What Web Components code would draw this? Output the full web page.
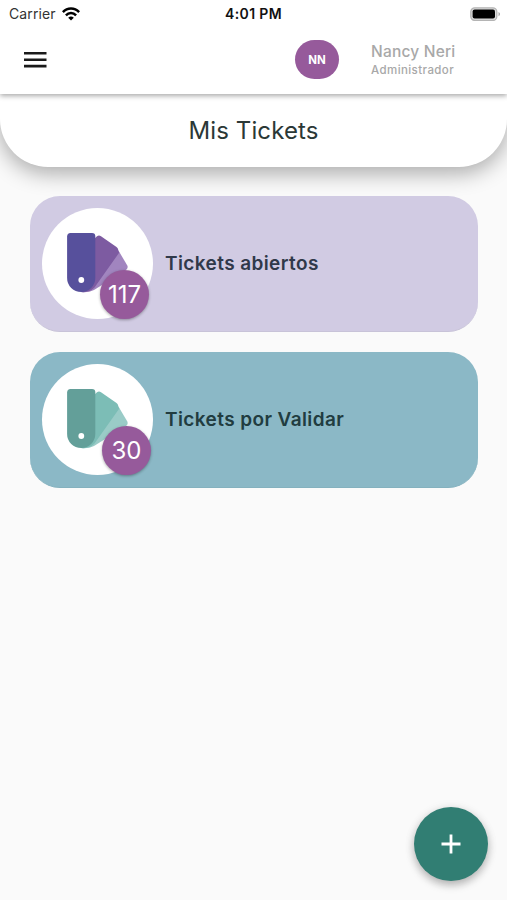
<!DOCTYPE html>
<html lang="es">
<head>
<meta charset="utf-8">
<title>Mis Tickets</title>
<style>
    html, body {
        height: 100%;
        margin: 0;
    }
    body {
        font-family: Inter, "Liberation Sans", sans-serif;
        background: #fafafa;
        overflow: hidden;
    }
</style>
</head>
<body>

<tickets-app>
    <status-bar slot="top" carrier="Carrier" time="4:01 PM"></status-bar>
    <app-header slot="top" initials="NN">
        <span slot="name">Nancy Neri</span>
        <span slot="role">Administrador</span>
    </app-header>
    <page-title slot="title">Mis Tickets</page-title>
    <ticket-card count="117" style="--card: #d1cbe3; --c1: #57509c; --c2: #7d5ba1; --c3: #a185bf; --edge: #c8c3d8; --text: #30394a; --badge-right: 4px">Tickets abiertos</ticket-card>
    <ticket-card count="30" style="--card: #8bb8c6; --c1: #639f99; --c2: #7cbdb6; --c3: #9acbc7; --edge: #84b1be; --text: #213c40; --badge-right: 2px">Tickets por Validar</ticket-card>
    <add-button slot="action"></add-button>
</tickets-app>

<script>
customElements.define("tickets-app", class extends HTMLElement {
    connectedCallback() {
        if (this.shadowRoot) return

        this.attachShadow({mode: "open"}).innerHTML = `
            <style>
                :host {
                    display: flex;
                    flex-direction: column;
                    height: 100vh;
                }
                header {
                    position: relative;
                    z-index: 2;
                    height: 94px;
                    flex: none;
                    background: #fff;
                    box-shadow: 0 2px 5px #0005;
                }
                main {
                    display: flex;
                    flex-direction: column;
                    gap: 20px;
                    flex: 1;
                    padding: 29px 29px 0 30px;
                }
                footer {
                    display: flex;
                    justify-content: flex-end;
                    padding: 0 19px 19px 0;
                }
            </style>

            <header><slot name="top"></slot></header>
            <slot name="title"></slot>
            <main><slot></slot></main>
            <footer><slot name="action"></slot></footer>
        `
    }
})

customElements.define("status-bar", class extends HTMLElement {
    connectedCallback() {
        if (this.shadowRoot) return

        this.attachShadow({mode: "open"}).innerHTML = `
            <style>
                :host {
                    display: grid;
                    grid-template-columns: 1fr auto 1fr;
                    align-items: center;
                    height: 27px;
                    padding: 0 7px 0 9px;
                    font-size: 14px;
                    color: #111;
                }
                .left {
                    display: flex;
                    align-items: center;
                    gap: 6px;
                    color: #333;
                }
                .left span {
                    letter-spacing: 0.1px;
                }
                b {
                    margin-right: 2px;
                    font-weight: 600;
                    letter-spacing: 0.35px;
                }
                svg {
                    display: block;
                }
                .battery {
                    justify-self: end;
                }
            </style>

            <div class="left">
                <span>${this.getAttribute("carrier")}</span>
                <svg width="18" height="14" viewBox="0 0 18 14" fill="none" stroke="#000" stroke-width="2.5">
                    <path d="M0.9 5.2C5.4 .4 12.6 .4 17.1 5.2"/>
                    <path d="M3.9 8.3C6.8 5.3 11.2 5.3 14.1 8.3"/>
                    <path d="M9 13.6L6.2 10.7Q9 8.5 11.8 10.7Z" fill="#000" stroke="none"/>
                </svg>
            </div>
            <b>${this.getAttribute("time")}</b>
            <svg class="battery" width="30" height="14" viewBox="0 0 30 14">
                <rect x="0.8" y="0.8" width="26" height="12.6" rx="4" fill="#ddd" stroke="#b4b4b4" stroke-width="1.3"/>
                <rect x="2.6" y="2.6" width="22.4" height="9" rx="2" fill="#000"/>
                <path d="M28.5 5Q30.2 6 30 7Q30.2 8.2 28.5 9.2Z" fill="#aaa"/>
            </svg>
        `
    }
})

customElements.define("app-header", class extends HTMLElement {
    connectedCallback() {
        if (this.shadowRoot) return

        this.attachShadow({mode: "open"}).innerHTML = `
            <style>
                :host {
                    display: flex;
                    align-items: center;
                    height: 65px;
                    padding: 0 52px 0 24px;
                }
                svg {
                    display: block;
                    margin-right: auto;
                }
                .avatar {
                    display: flex;
                    align-items: center;
                    justify-content: center;
                    width: 44px;
                    height: 39px;
                    margin-right: 32px;
                    border-radius: 20px;
                    background: #965a9b;
                    color: #fff;
                    font-size: 11.5px;
                    font-weight: 700;
                }
                .user {
                    width: 84px;
                    padding-top: 2px;
                    white-space: nowrap;
                    color: #a8a8a8;
                }
                .name {
                    font-size: 15.5px;
                    line-height: 20px;
                    font-weight: 500;
                    letter-spacing: 0.2px;
                }
                .role {
                    font-size: 11.5px;
                    line-height: 17px;
                    font-weight: 500;
                    letter-spacing: 0.42px;
                }
            </style>

            <svg width="23" height="16" viewBox="0 0 23 16" fill="#1a1a1a">
                <path d="M0 0H22.5V2.6H0ZM0 6.5H22.5V9.1H0ZM0 12.8H22.5V15.4H0Z"/>
            </svg>
            <div class="avatar">${this.getAttribute("initials")}</div>
            <div class="user">
                <div class="name"><slot name="name"></slot></div>
                <div class="role"><slot name="role"></slot></div>
            </div>
        `
    }
})

customElements.define("page-title", class extends HTMLElement {
    connectedCallback() {
        if (this.shadowRoot) return

        this.attachShadow({mode: "open"}).innerHTML = `
            <style>
                :host {
                    display: flex;
                    align-items: center;
                    justify-content: center;
                    flex: none;
                    height: 73px;
                    border-radius: 0 0 48px 48px;
                    background: #fff;
                    box-shadow: 0 6px 22px #0005;
                    color: #2b3836;
                    font-size: 24px;
                    letter-spacing: 0.1px;
                }
            </style>
            <slot></slot>
        `
    }
})

customElements.define("ticket-card", class extends HTMLElement {
    connectedCallback() {
        if (this.shadowRoot) return

        this.attachShadow({mode: "open"}).innerHTML = `
            <style>
                :host {
                    display: flex;
                    align-items: center;
                    gap: 12px;
                    box-sizing: border-box;
                    height: 136px;
                    padding: 0 12px;
                    border-bottom: 1px solid var(--edge);
                    border-radius: 30px;
                    background: var(--card);
                }
                .icon {
                    position: relative;
                    width: 111px;
                    height: 111px;
                    border-radius: 50%;
                    background: #fff;
                }
                svg {
                    display: block;
                }
                .badge {
                    position: absolute;
                    right: var(--badge-right);
                    bottom: 0;
                    display: flex;
                    align-items: center;
                    justify-content: center;
                    width: 49px;
                    height: 49px;
                    border-radius: 50%;
                    background: #965a9b;
                    box-shadow: 0 1px 3px #0005;
                    color: #fff;
                    font-size: 24px;
                }
                .label {
                    color: var(--text);
                    font-size: 19px;
                    font-weight: 600;
                    letter-spacing: 0.4px;
                }
            </style>

            <div class="icon">
                <svg width="111" height="111" viewBox="0 0 111 111">
                    <path d="M77 43.5L85.3 57.5Q86.500 60 84 62L52 82Q46 85 39 84Z" fill="var(--c3)"/>
                    <path d="M52 31L55 28.300Q57 26.800 59 28.300L74.500 39Q76 40 76.300 42L77.300 44.500L52.500 79.500Q47 85 39 84Z" fill="var(--c2)"/>
                    <path d="M28.500 25H50Q53.300 25 53.300 28V70A14.100 14.100 0 0 1 25.100 70V28.500Q25.200 25 28.500 25Z" fill="var(--c1)"/>
                    <circle cx="39.300" cy="72" r="2.900" fill="#fff"/>
                </svg>
                <div class="badge">${this.getAttribute("count")}</div>
            </div>
            <div class="label"><slot></slot></div>
        `
    }
})

customElements.define("add-button", class extends HTMLElement {
    connectedCallback() {
        if (this.shadowRoot) return

        this.attachShadow({mode: "open"}).innerHTML = `
            <style>
                :host {
                    display: flex;
                    align-items: center;
                    justify-content: center;
                    width: 74px;
                    height: 74px;
                    border-radius: 50%;
                    background: #317e73;
                    box-shadow: 0 4px 8px #0004, 0 1px 12px #0001;
                }
            </style>
            <svg width="20" height="20" viewBox="0 0 20 20" stroke="#fff" stroke-width="2.8">
                <path d="M10 .5V19.5M.5 10H19.5"/>
            </svg>
        `
    }
})
</script>
</body>
</html>
